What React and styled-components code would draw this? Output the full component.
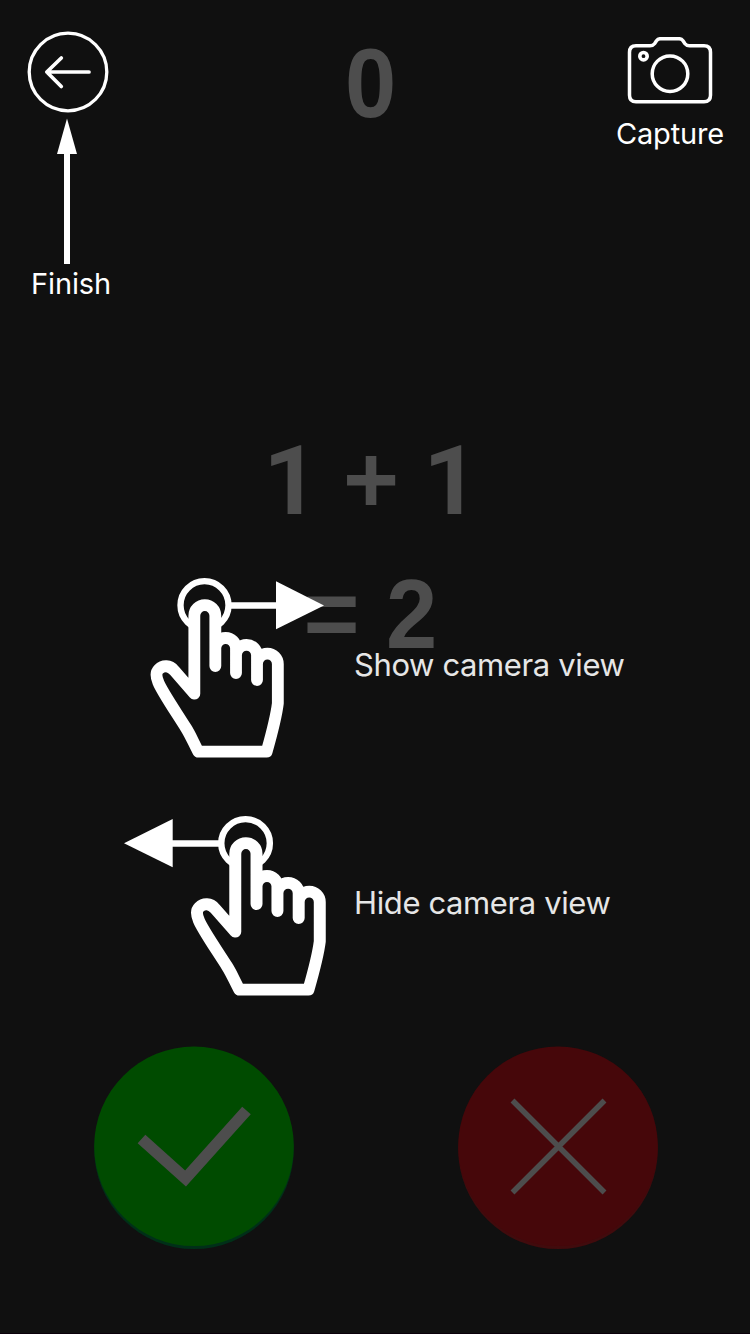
import React from 'react';
import styled, { createGlobalStyle } from 'styled-components';

const Global = createGlobalStyle`
  body { margin: 0; background: #101010; }
  svg { display: block; }
`;

const Screen = styled.main`
  position: relative;
  width: 750px;
  height: 1334px;
  overflow: hidden;
  box-sizing: border-box;
  background: #101010;
  border-bottom: 1px solid #0a000a;
  font-family: Inter, sans-serif;
`;

const Game = styled.section`
  display: flex;
  flex-direction: column;
  align-items: center;
  height: 100%;
  color: #4d4d4d;
  font: bold 96px/134px 'Liberation Sans', Arial, sans-serif;
`;

const Score = styled.div`
  height: 134px;
  padding-top: 16px;
  margin-right: 9px;
`;

const Equation = styled.div`
  height: 268px;
  margin-top: 263px;
  margin-right: 8px;
`;

const Line = styled.div`
  height: 134px;
  text-align: center;
  white-space: nowrap;
  word-spacing: ${(p) => p.$gap}px;
`;

const Tall = styled.span`
  display: inline-block;
  line-height: 134px;
  transform: translateY(1px) scale(0.96, 1.025);
  transform-origin: 50% 75%;
`;

const One = styled.span`
  display: inline-block;
  font-family: Roboto, sans-serif;
  font-size: 97px;
  line-height: 1;
  transform: translateY(1px);
`;

const Answers = styled.div`
  display: flex;
  gap: 164px;
  margin-top: 365px;
  padding-left: 2px;
`;

const Answer = styled.button`
  width: 200px;
  height: 204px;
  padding: 0;
  border: 0;
  background: none;
`;

const Guide = styled.section`
  position: absolute;
  inset: 0;
  display: flex;
  flex-direction: column;
  color: #fff;
`;

const TopBar = styled.header`
  display: flex;
  justify-content: space-between;
  height: 560px;
`;

const Action = styled.div`
  display: flex;
  flex-direction: column;
  align-items: center;
  gap: ${(p) => p.$gap}px;
  padding-top: ${(p) => p.$top}px;
  width: ${(p) => p.$width}px;
  height: fit-content;
`;

const Label = styled.span`
  font-size: 29px;
  line-height: 36px;
  letter-spacing: -0.15px;
  white-space: nowrap;
`;

const Gesture = styled.div`
  display: flex;
  height: 238px;
`;

const GestureArt = styled.div`
  width: 354px;
  flex: none;
`;

const GestureLabel = styled.span`
  padding-top: 86px;
  font-size: 31px;
  line-height: 38px;
  letter-spacing: -0.38px;
  color: #e6e6e6;
  white-space: nowrap;
`;

const Hand = () => (
  <g strokeWidth="35.5" strokeLinecap="round" strokeLinejoin="round" stroke="#fff" fill="none">
    <circle cx="223.5" cy="135.5" r="72" strokeWidth="19" />
    <path d="M193 165a31.5 31.5 0 0 1 63 0V318H193Z" fill="#101010" stroke="none" />
    <path d="M193 401V167a31.5 31.5 0 0 1 63 0V318M256 265a31 31 0 0 1 62 0V339M318 286a31.5 31.5 0 0 1 63 0V360M381 312a31 31 0 0 1 62.500 0V430Q438 476 410 575H205C190 547 182 526 168 504C136 453 95 393 85 367C77 348 77 337 86 328C99 315 119 315 133 332L193 401" />
  </g>
);

const SwipeRight = () => (
  <svg width="355" height="238" viewBox="-390 0 1065 714">
    <Hand />
    <path d="M302 136.500H440" stroke="#fff" strokeWidth="19" />
    <path d="M438 64L582 136.500L438 208Z" fill="#fff" />
  </svg>
);

const SwipeLeft = () => (
  <svg width="355" height="238" viewBox="-330 -6 1065 714">
    <g transform="translate(180.500 -6) scale(1.012 1)"><Hand /></g>
    <path d="M186 130.500H328" stroke="#fff" strokeWidth="19" />
    <path d="M42 130L188 57V202Z" fill="#fff" />
  </svg>
);

const BackIcon = () => (
  <svg width="90" height="234" viewBox="0 0 90 234" fill="none" stroke="#fff" strokeLinecap="round" strokeLinejoin="round">
    <circle cx="42" cy="42" r="38.800" strokeWidth="3.300" />
    <path d="M63 42H21M35.300 28L20.800 42L35.300 56.500" strokeWidth="3.700" />
    <path d="M41 118V234" strokeWidth="6" strokeLinecap="butt" />
    <path d="M41 88.500L51 124H31Z" fill="#fff" stroke="none" />
  </svg>
);

const CameraIcon = () => (
  <svg width="86" height="68" viewBox="-0.5 0.3 86 68" fill="none" stroke="#fff" strokeWidth="3.500" strokeLinejoin="round">
    <path d="M8.500 9H22.500Q25.500 9 27 7L29 4Q30.500 2 33 2H51.500Q54 2 55.500 4L57.500 7Q59 9 62 9H76.500Q83 9 83 15.500V58.500Q83 65 76.500 65H8.500Q2 65 2 58.500V15.500Q2 9 8.500 9Z" />
    <circle cx="42.500" cy="37" r="17.800" />
    <circle cx="16" cy="19.500" r="3.700" strokeWidth="3.600" />
  </svg>
);

export default function App() {
  return (
    <Screen>
      <Global />
      <Game>
        <Score><Tall>0</Tall></Score>
        <Equation>
          <Line $gap={-2.5}><One>1</One> + <One>1</One></Line>
          <Line $gap={-1}>= <Tall>2</Tall></Line>
        </Equation>
        <Answers>
          <Answer aria-label="Correct">
            <svg width="200" height="204" viewBox="0 0 200 204">
              <circle cx="100" cy="103.300" r="99.800" fill="#003018" />
              <circle cx="100" cy="100.300" r="99.800" fill="#004b00" />
              <path d="M47.500 92.500L91.500 132L152.500 64" transform="translate(0 .5)" fill="none" stroke="#4d4d4d" strokeWidth="11.500" />
            </svg>
          </Answer>
          <Answer aria-label="Wrong">
            <svg width="200" height="204" viewBox="0 0 200 204">
              <circle cx="100" cy="103.300" r="99.800" fill="#410b0d" />
              <circle cx="100" cy="100.300" r="99.800" fill="#46070a" />
              <path d="M54.500 54.500L146.500 146.500M146.500 54.500L54.500 146.500" fill="none" stroke="#4d4d4d" strokeWidth="5.500" />
            </svg>
          </Answer>
        </Answers>
      </Game>
      <Guide>
        <TopBar>
          <Action $top={30} $width={142} $gap={2}>
            <BackIcon />
            <Label>Finish</Label>
          </Action>
          <Action $top={37} $width={160} $gap={11}>
            <CameraIcon />
            <Label>Capture</Label>
          </Action>
        </TopBar>
        <Gesture>
          <GestureArt><SwipeRight /></GestureArt>
          <GestureLabel>Show camera view</GestureLabel>
        </Gesture>
        <Gesture>
          <GestureArt><SwipeLeft /></GestureArt>
          <GestureLabel>Hide camera view</GestureLabel>
        </Gesture>
      </Guide>
    </Screen>
  );
}
